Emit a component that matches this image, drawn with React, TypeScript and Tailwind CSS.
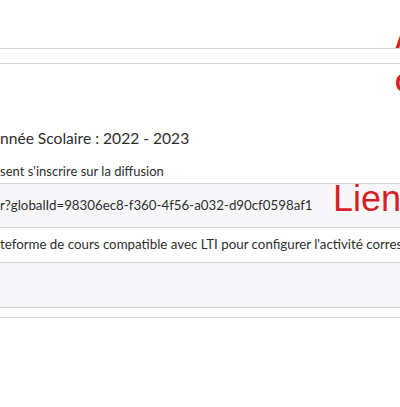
import type { FC } from 'react';

const Row: FC<{ text: string; gray?: boolean; h: string }> = ({ text, gray, h }) => (
  <div
    className={`flex items-center border-b border-[#d4d4d4] ${h} ${gray ? 'bg-[#f7f7f9]' : 'bg-white'}`}
  >
    <span className="whitespace-nowrap text-[13.3px] text-[#2e2e2e]">{text}</span>
  </div>
);

const App: FC = () => {
  return (
    <div
      className="relative h-[407px] w-[400px] overflow-hidden bg-white"
      style={{ fontFamily: 'Lato, "Liberation Sans", sans-serif' }}
    >
      <div className="h-[49px] border-b border-[#d4d4d4]" />
      <div className="h-[15px] border-b border-[#d4d4d4]" />
      <div className="flex h-[120px] flex-col justify-end border-b border-[#d4d4d4] pb-[3px]">
        <div className="whitespace-nowrap text-[15.6px] leading-[20px] text-[#2e2e2e]">
          nnée Scolaire : 2022 - 2023
        </div>
        <div className="mt-[14px] whitespace-nowrap text-[13px] leading-[18px] text-[#2e2e2e]">
          sent s'inscrire sur la diffusion
        </div>
      </div>
      <Row gray h="h-[44px]" text="r?globalId=98306ec8-f360-4f56-a032-d90cf0598af1" />
      <Row h="h-[35px]" text="teforme de cours compatible avec LTI pour configurer l'activité correspondante" />
      <div className="h-[45px] border-b border-[#d4d4d4] bg-[#f7f7f9]" />
      <div className="h-[10px] border-b border-[#d4d4d4] bg-[#fcfcfc]" />

      <span
        className="absolute left-[395px] top-[27px] text-[25px] font-bold leading-none text-[#d71f27]"
        style={{ fontFamily: '"Liberation Sans", Arial, sans-serif' }}
      >
        A
      </span>
      <span
        className="absolute left-[395px] top-[71px] text-[25px] font-bold leading-none text-[#d71f27]"
        style={{ fontFamily: '"Liberation Sans", Arial, sans-serif' }}
      >
        C
      </span>
      <span
        className="absolute left-[333px] top-[181px] text-[36px] leading-none text-[#d71f27]"
        style={{ fontFamily: '"Liberation Sans", Arial, sans-serif' }}
      >
        Lien
      </span>
    </div>
  );
};

export default App;
